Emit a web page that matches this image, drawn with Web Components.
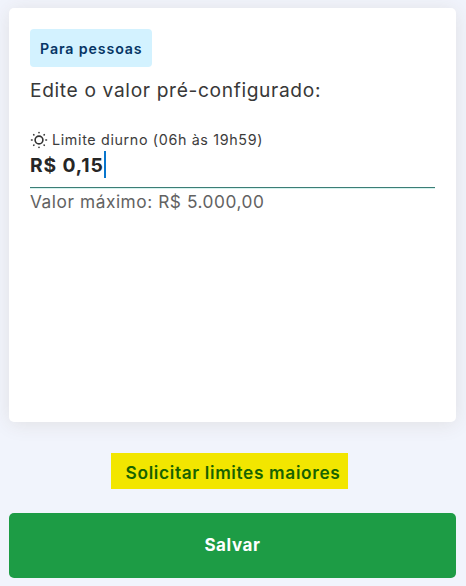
<!DOCTYPE html>
<html lang="pt-BR">
<head>
<meta charset="utf-8">
<title>Limite Pix</title>
<style>
  html, body { margin: 0; height: 100%; }
  body { background: #f1f4fc; font-family: Inter, "Noto Sans", sans-serif; overflow: hidden; }
</style>
</head>
<body>
<limit-screen></limit-screen>
<script>
const define = (name, markup) => customElements.define(name, class extends HTMLElement {
  constructor() {
    super();
    this.attachShadow({ mode: "open" }).innerHTML = markup;
  }
});

define("audience-tag", `
  <style>
    :host { display: flex; align-items: center; width: 122px; height: 38px; box-sizing: border-box;
      padding: 2px 0 0 10px; border-radius: 4px; background: #d3f2ff; color: #063565;
      font-size: 14.2px; font-weight: 600; line-height: 20px; letter-spacing: .88px; white-space: nowrap; }
  </style><slot></slot>`);

define("sun-icon", `
  <style>:host { display: block; width: 18px; height: 18px; } svg { display: block; }</style>
  <svg width="18" height="18" viewBox="0 0 18 18" fill="none" stroke="#333" stroke-width="1.6" stroke-linecap="round">
    <circle cx="9" cy="9" r="3.9"/>
    <path d="M9 1.5v.3M9 16.2v.3M1.5 9h.6M15.9 9h.6M3.7 3.7l.2.2M14.1 14.1l.2.2M3.7 14.3l.2-.2M14.1 3.9l.2-.2"/>
  </svg>`);

define("amount-field", `
  <style>
    :host { display: block; }
    .label { display: flex; align-items: center; gap: 4px; height: 20px; color: #3c3c3c;
      font-size: 14.3px; line-height: 20px; letter-spacing: .65px; white-space: nowrap; }
    .value { display: flex; align-items: center; height: 29px; padding-bottom: 8px; border-bottom: 1px solid #3c7d76;
      box-shadow: 0 1px 0 #d5f3ee; color: #262626; font-size: 19.3px; font-weight: 700; line-height: 28px; letter-spacing: .85px; white-space: nowrap; }
    .value span { padding-top: 1px; }
    .caret { width: 2px; height: 27px; background: #0876ce; }
    .hint { height: 26px; color: #626262; font-size: 17.3px; line-height: 27px; letter-spacing: .55px; white-space: nowrap; }
  </style>
  <div class="label"><sun-icon></sun-icon><span><slot name="label"></slot></span></div>
  <div class="value"><span><slot name="value"></slot></span><i class="caret"></i></div>
  <div class="hint"><span><slot name="hint"></slot></span></div>`);

define("limit-card", `
  <style>
    :host { display: block; box-sizing: border-box; height: 414px; padding: 21px 21px 0; border-radius: 5px;
      background: #fff; box-shadow: 0 2px 20px rgba(90, 60, 10, .1); }
    h1 { margin: 10px 0 26px; height: 27px; color: #383838; font-size: 19.2px; font-weight: 400;
      line-height: 27px; letter-spacing: .64px; white-space: nowrap; }
  </style>
  <slot name="tag"></slot>
  <h1><span><slot name="title"></slot></span></h1>
  <slot></slot>`);

define("request-link", `
  <style>
    :host { display: flex; align-items: center; justify-content: center; box-sizing: border-box; width: 237px; height: 36px;
      padding: 3px 0 0 7px; background: #f2e600; color: #176300; font-size: 17.3px; font-weight: 600;
      line-height: 24px; letter-spacing: .65px; white-space: nowrap; cursor: pointer; }
  </style><span><slot></slot></span>`);

define("save-button", `
  <style>
    :host { display: block; }
    button { display: flex; align-items: center; justify-content: center; width: 100%; height: 65px; padding: 0 0 2px;
      border: 0; border-radius: 5px; background: #1d9c45; color: #fff; font: 700 17px/24px Inter, "Noto Sans", sans-serif; letter-spacing: .6px; }
  </style><button><span><slot></slot></span></button>`);

define("limit-screen", `
  <style>
    :host { display: flex; flex-direction: column; box-sizing: border-box; height: 586px; padding: 8px 10px 0 9px; }
    request-link { margin: 31px 0 24px 102px; }
  </style>
  <limit-card>
    <audience-tag slot="tag">Para pessoas</audience-tag>
    <span slot="title">Edite o valor pré-configurado:</span>
    <amount-field>
      <span slot="label">Limite diurno (06h às 19h59)</span>
      <span slot="value">R$ 0,15</span>
      <span slot="hint">Valor máximo: R$ 5.000,00</span>
    </amount-field>
  </limit-card>
  <request-link>Solicitar limites maiores</request-link>
  <save-button>Salvar</save-button>`);
</script>
</body>
</html>
